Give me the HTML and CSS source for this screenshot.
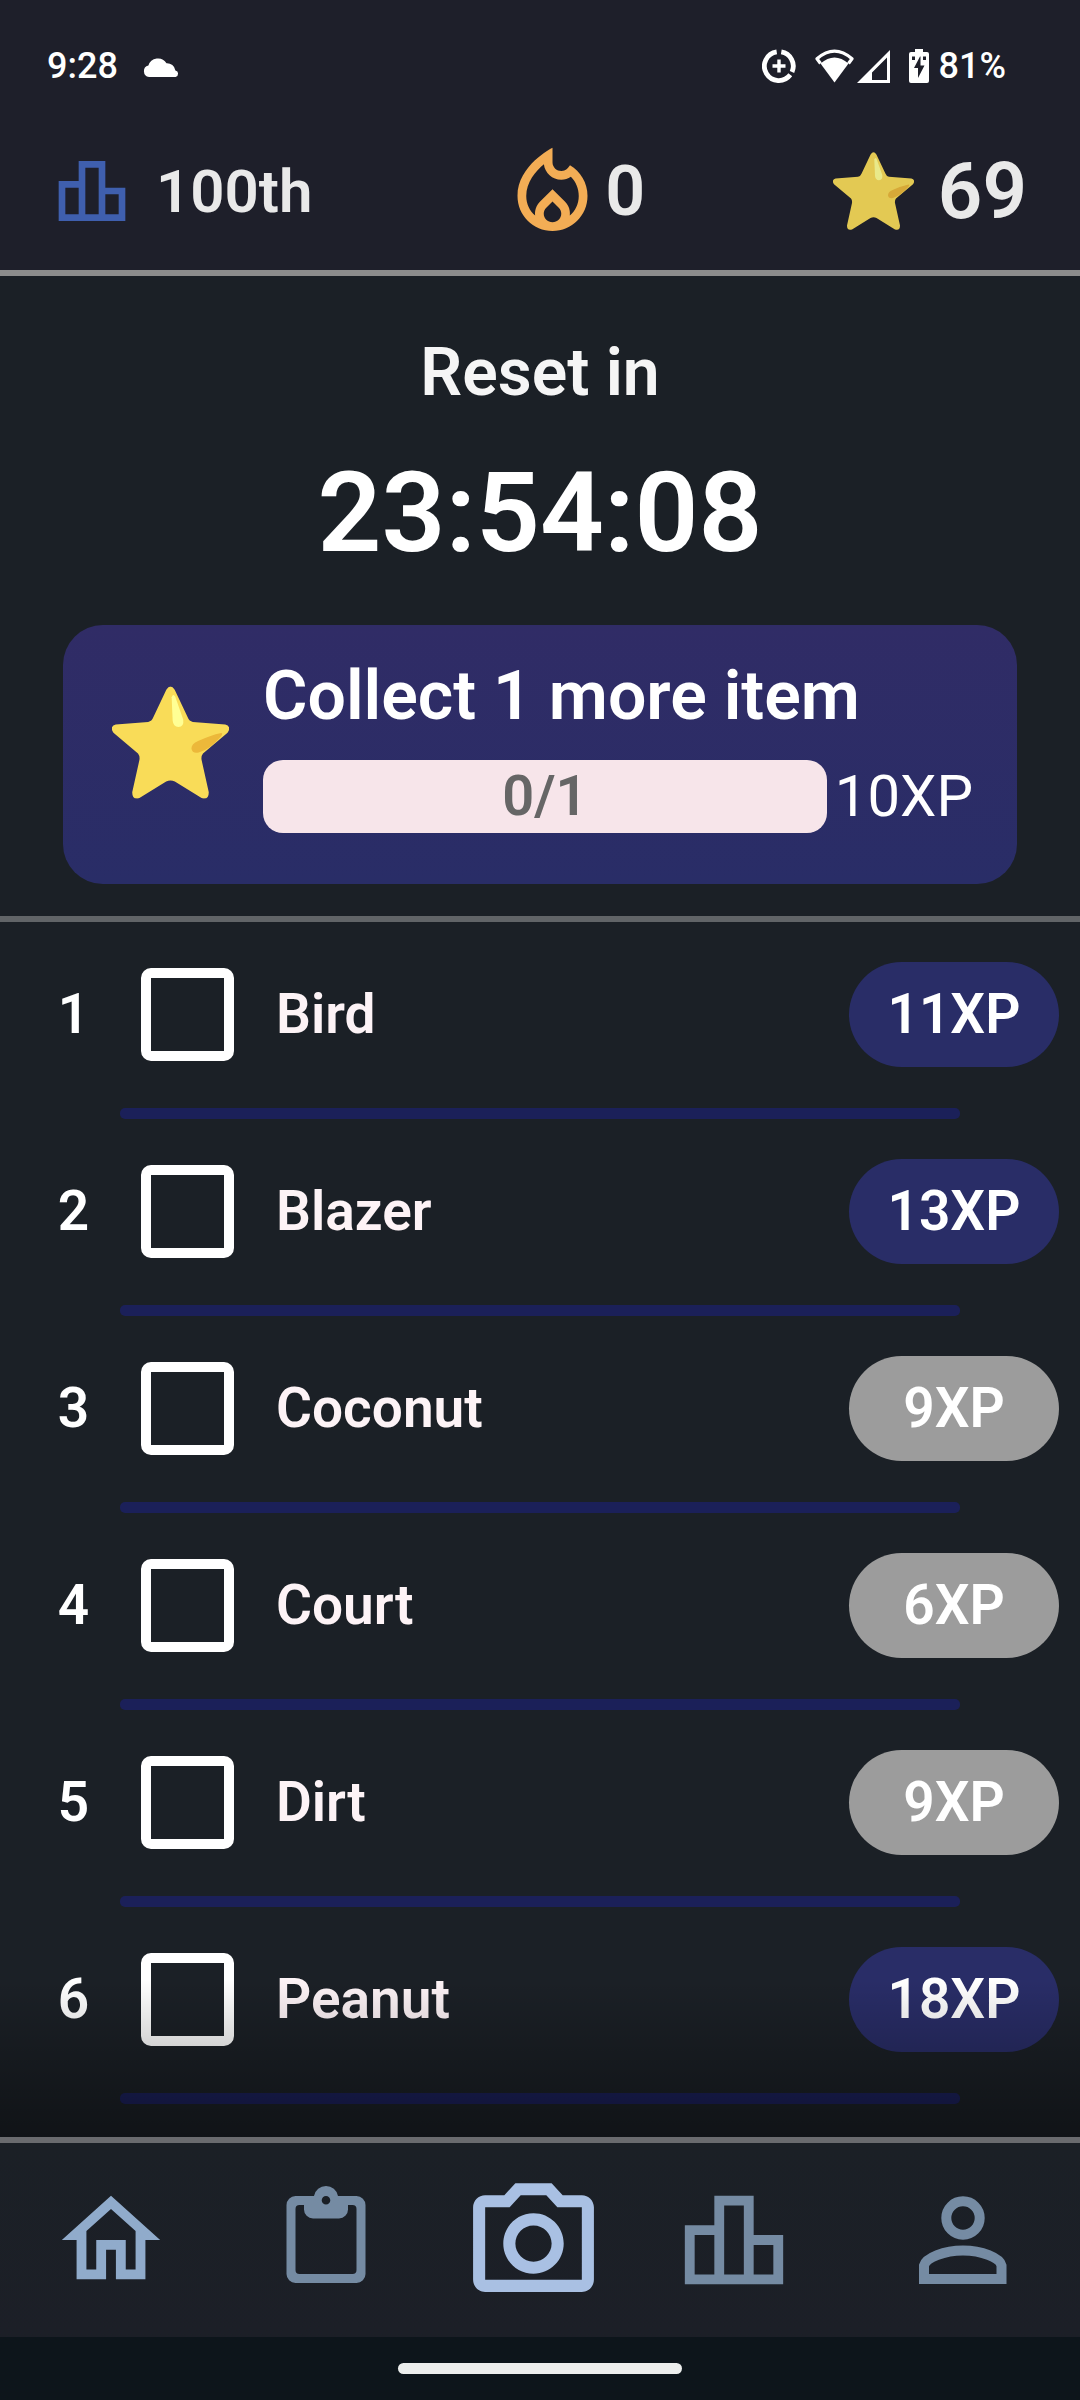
FILE: index.html
```html
<!DOCTYPE html>
<html lang="en">
<head>
<meta charset="utf-8">
<meta name="viewport" content="width=device-width, initial-scale=1">
<title>Daily items</title>
<link rel="stylesheet" href="styles.css">
</head>
<body>
<svg class="defs" aria-hidden="true">
  <symbol id="star" viewBox="0 0 81 78">
    <path fill="#f9dc58" d="M37.6 2.4Q40.5-2 43.4 2.4L52.4 21.6Q53.4 24.4 56 24.8L78.4 26.6Q83 28 80 32.2L63 46.6Q61.6 48.4 62 51L67 73.4Q67 79 62 77.4L43.500 66Q40.500 64.6 37.500 66L19 77.400Q14 79 14 73.400L19 51Q19.400 48.400 18 46.600L1 32.200Q-2 28 2.600 26.600L25 24.800Q27.600 24.400 28.600 21.600Z"/>
    <path fill="#ffff94" d="M41.300 7.600Q42.400 4.600 43.800 7.400L49.300 23Q50 28 46 28.300Q42.400 28 42 24Z"/>
    <path fill="#ecb83a" d="M75.600 32.400Q77 32.400 75.600 34.600Q68 43.600 60 46Q55.400 46.800 55 43.200Q55 40 59.600 38Q68 34 75.600 32.400Z"/>
  </symbol>
  <symbol id="bars" viewBox="0 0 24 24">
    <path fill="currentColor" d="M16 11V3H8v6H2v12h20V11h-6zm-6-6h4v14h-4V5zm-6 6h4v8H4v-8zm16 8h-4v-6h4v6z"/>
  </symbol>
</svg>

<header class="top">
  <div class="status">
    <span>9:28</span>
    <svg class="cloud" viewBox="0 0 36 21" aria-hidden="true"><path fill="#fff" d="M6 21a5.800 5.800 0 0 1-.6-11.400A10 10 0 0 1 23.500 7.200a8.500 8.500 0 0 1 8.900 7.200A3.400 3.400 0 0 1 32.600 21z"/></svg>
    <span class="spacer"></span>
    <svg class="saver" viewBox="0 0 34 34" aria-hidden="true"><g fill="none" stroke="#fff" stroke-width="4.800"><path d="M14.700 2.900A14.400 14.400 0 1 0 28.300 25.800"/><path d="M19.300 2.900A14.400 14.400 0 0 1 30 23"/><path stroke-width="3.400" d="M17 10.500v13M10.500 17h13"/></g></svg>
    <svg class="wifi" viewBox="0 0 39 34" aria-hidden="true"><path fill="#fff" d="M19.500 33.500L5.500 14.500Q19.500 2.500 33.500 14.500Z"/><path fill="none" stroke="#fff" stroke-width="3.200" stroke-linejoin="round" d="M5.500 14.500L2 9.700Q19.500-5.500 37 9.700L33.500 14.500"/></svg>
    <svg class="signal" viewBox="0 0 33 33" aria-hidden="true"><path fill="#fff" fill-rule="evenodd" d="M33 0V33H0ZM30 7.500L15 22.600V30H30Z"/></svg>
    <svg class="battery" viewBox="0 0 20 34" aria-hidden="true"><path fill="#fff" d="M6 0h8v3h4a2 2 0 0 1 2 2v27a2 2 0 0 1-2 2H2a2 2 0 0 1-2-2V5a2 2 0 0 1 2-2h4z"/><path fill="#1e1f2a" d="M11 7.500L5 19h4v10l6.500-12.500h-4V7.500zM3 7.500h3V11H3zM14 7.500h3V11h-3z"/></svg>
    <span>81%</span>
  </div>
  <div class="stats">
    <div class="stat stat-rank"><svg viewBox="0 0 24 24" aria-hidden="true"><use href="#bars"/></svg><span>100th</span></div>
    <div class="stat stat-streak"><svg viewBox="0 0 24 24" aria-hidden="true"><path fill="#f3ad55" d="M16 6l-.44.55c-.42.52-.98.75-1.540.75C13 7.300 12 6.520 12 5.300V2S4 6 4 13c0 4.420 3.580 8 8 8s8-3.580 8-8c0-2.960-1.610-5.620-4-7zm-4 13c-1.100 0-2-.87-2-1.940 0-.51.2-.99.58-1.360L12 14.300l1.430 1.400c.37.37.57.85.57 1.360 0 1.070-.9 1.940-2 1.940zm3.960-1.500c.04-.36.22-1.890-1.130-3.220L12 11.500l-2.830 2.780C7.810 15.620 8 17.160 8.040 17.500 6.790 16.400 6 14.790 6 13c0-3.160 2.130-5.650 4.030-7.250.23 1.990 1.930 3.550 3.990 3.550.78 0 1.540-.23 2.180-.66C17.340 9.780 18 11.350 18 13c0 1.790-.79 3.400-2.040 4.500z"/></svg><span>0</span></div>
    <div class="stat stat-points"><svg viewBox="0 0 81 78" aria-hidden="true"><use href="#star"/></svg><span>69</span></div>
  </div>
</header>

<main>
  <section class="hero">
    <h1 class="reset">Reset in</h1>
    <div class="timer" role="timer">23:54:08</div>
    <div class="goal">
      <svg class="goal-star" viewBox="0 0 81 78" aria-hidden="true"><use href="#star"/></svg>
      <div class="goal-body">
        <h2 class="goal-title">Collect 1 more item</h2>
        <div class="goal-row">
          <div class="meter" role="progressbar" aria-label="Items collected" aria-valuemin="0" aria-valuemax="1" aria-valuenow="0">0/1</div>
          <span class="reward">10XP</span>
        </div>
      </div>
    </div>
  </section>

  <section class="items">
    <ol class="list">
      <li class="item"><div class="item-row"><span class="num">1</span><input class="check" type="checkbox" id="item1"><label class="name" for="item1">Bird</label><span class="pill">11XP</span></div></li>
      <li class="item"><div class="item-row"><span class="num">2</span><input class="check" type="checkbox" id="item2"><label class="name" for="item2">Blazer</label><span class="pill">13XP</span></div></li>
      <li class="item"><div class="item-row"><span class="num">3</span><input class="check" type="checkbox" id="item3"><label class="name" for="item3">Coconut</label><span class="pill pill-low">9XP</span></div></li>
      <li class="item"><div class="item-row"><span class="num">4</span><input class="check" type="checkbox" id="item4"><label class="name" for="item4">Court</label><span class="pill pill-low">6XP</span></div></li>
      <li class="item"><div class="item-row"><span class="num">5</span><input class="check" type="checkbox" id="item5"><label class="name" for="item5">Dirt</label><span class="pill pill-low">9XP</span></div></li>
      <li class="item"><div class="item-row"><span class="num">6</span><input class="check" type="checkbox" id="item6"><label class="name" for="item6">Peanut</label><span class="pill">18XP</span></div></li>
    </ol>
  </section>
</main>

<nav class="nav" aria-label="Main">
  <button class="tab tab-home" type="button" aria-label="Home"><svg viewBox="0 0 24 24"><path fill="currentColor" d="M12 5.690l5 4.500V18h-2v-6H9v6H7v-7.810l5-4.500M12 3L2 12h3v8h6v-6h2v6h6v-8h3L12 3z"/></svg></button>
  <button class="tab" type="button" aria-label="Tasks"><svg viewBox="0 0 118 118"><path fill="currentColor" fill-rule="evenodd" d="M28.500 15H47a12.200 12.200 0 0 1 24 0h18.500a9 9 0 0 1 9 9v69a9 9 0 0 1-9 9h-61a9 9 0 0 1-9-9V24a9 9 0 0 1 9-9zM37 24h-4.500a4 4 0 0 0-4 4v61a4 4 0 0 0 4 4h53a4 4 0 0 0 4-4V28a4 4 0 0 0-4-4H81v4.500a9 9 0 0 1-9 9H46a9 9 0 0 1-9-9zM59 15a4.300 4.300 0 1 0 0 8.600a4.300 4.300 0 1 0 0-8.600z"/></svg></button>
  <button class="tab tab-camera" type="button" aria-label="Camera"><svg viewBox="0 0 24 24"><path fill="currentColor" d="M14.120 5l1.830 2H20v12H4V7h4.050l1.830-2h4.240M15 3H9L7.170 5H4c-1.100 0-2 .9-2 2v12c0 1.100.9 2 2 2h16c1.100 0 2-.9 2-2V7c0-1.100-.9-2-2-2h-3.170L15 3zm-3 7c1.650 0 3 1.350 3 3s-1.350 3-3 3-3-1.350-3-3 1.350-3 3-3m0-2c-2.760 0-5 2.240-5 5s2.240 5 5 5 5-2.240 5-5-2.240-5-5-5z"/></svg></button>
  <button class="tab" type="button" aria-label="Leaderboard"><svg viewBox="0 0 24 24"><use href="#bars"/></svg></button>
  <button class="tab" type="button" aria-label="Profile"><svg viewBox="0 0 118 118"><g fill="none" stroke="currentColor" stroke-width="10"><circle cx="59" cy="37" r="16.700"/><path d="M20 98V84.500C22 77 40 69.500 59 69.500S96 77 97.500 84.500V98Z"/></g></svg></button>
</nav>
<div class="gesture"><div class="handle"></div></div>
</body>
</html>
```
FILE: styles.css
```css
* {
  box-sizing: border-box;
}

body {
  margin: 0;
  min-height: 100vh;
  display: flex;
  flex-direction: column;
  background: #1b2026;
  color: #fff;
  font-family: Roboto, "Liberation Sans", sans-serif;
  font-weight: 600;
}

svg {
  display: block;
  flex: none;
}

h1,
h2 {
  margin: 0;
  font-weight: 600;
}

.defs {
  position: absolute;
  width: 0;
  height: 0;
}

/* Status bar and stats */
.top {
  background: #1e1f2a;
  border-bottom: 6px solid #8c8c8c;
  padding-bottom: 20px;
}

.status {
  display: flex;
  align-items: center;
  height: 132px;
  padding: 0 74px 0 47px;
  font-size: 36px;
  font-weight: 500;
}

.spacer {
  flex: 1;
}

.cloud {
  width: 36px;
  height: 21px;
  margin-left: 25px;
}

.saver {
  width: 34px;
  height: 34px;
  margin-right: 19px;
}

.wifi {
  width: 39px;
  height: 34px;
  margin-right: 3px;
}

.signal {
  width: 33px;
  height: 33px;
  margin-right: 19px;
}

.battery {
  width: 20px;
  height: 34px;
  margin-right: 10px;
}

.stats {
  display: flex;
  align-items: center;
  justify-content: space-between;
  height: 118px;
  padding: 0 53px 0 52px;
}

.stat {
  display: flex;
  align-items: center;
  color: #e9e9e9;
}

.stat-rank {
  gap: 24px;
  font-size: 60px;
}

.stat-rank svg {
  width: 80px;
  height: 80px;
  color: #3f5fae;
}

.stat-streak {
  font-size: 70px;
}

.stat-streak svg {
  width: 105px;
  height: 105px;
}

.stat-points {
  gap: 24px;
  font-size: 78px;
}

.stat-points svg {
  width: 81px;
  height: 78px;
  opacity: 0.9;
}

/* Countdown and goal card */
.hero {
  padding: 57px 63px 32px;
  border-bottom: 6px solid #616467;
}

.reset {
  color: #f5f5f5;
  font-size: 66px;
  line-height: 80px;
  text-align: center;
}

.timer {
  margin: 34px 0 46px;
  font-size: 112px;
  line-height: 132px;
  text-align: center;
}

.goal {
  display: flex;
  align-items: center;
  gap: 34px;
  padding: 31px 44px 51px 49px;
  border-radius: 40px;
  background: linear-gradient(#302c66, #292d67);
}

.goal-star {
  width: 117px;
  height: 113px;
  margin-bottom: 4px;
}

.goal-body {
  flex: 1;
}

.goal-title {
  margin-bottom: 24px;
  font-size: 68px;
  line-height: 80px;
}

.goal-row {
  display: flex;
  align-items: center;
  gap: 8px;
}

.meter {
  flex: 1;
  height: 73px;
  border-radius: 20px;
  background: #f7e5ea;
  color: #666;
  font-size: 56px;
  line-height: 73px;
  text-align: center;
}

.reward {
  font-size: 58px;
  font-weight: 400;
  line-height: 73px;
}

/* Item list */
.items {
  position: relative;
  padding-bottom: 33px;
}

.items::after {
  content: "";
  position: absolute;
  inset: auto 0 0;
  height: 157px;
  background: linear-gradient(transparent, rgba(0, 0, 0, 0.4));
  pointer-events: none;
}

.list {
  margin: 0;
  padding: 0;
  list-style: none;
}

.item {
  padding-top: 39px;
}

.item::after {
  content: "";
  display: block;
  height: 11px;
  margin: 41px 120px 0;
  border-radius: 5px;
  background: #1b2059;
}

.item-row {
  display: flex;
  align-items: center;
  height: 106px;
  padding: 0 21px 0 40px;
  font-size: 55px;
}

.num {
  width: 67px;
  text-align: center;
}

.check {
  appearance: none;
  width: 93px;
  height: 93px;
  margin: 0 42px 0 34px;
  border: 10px solid #fff;
  border-radius: 10px;
}

.name {
  flex: 1;
  color: #fdf3f6;
}

.pill {
  width: 210px;
  height: 105px;
  border-radius: 53px;
  background: #292d67;
  line-height: 105px;
  text-align: center;
}

.pill-low {
  background: #9c9c9c;
}

/* Bottom navigation */
.nav {
  display: grid;
  grid-template-columns: 192fr 214fr 177fr 200fr 234fr;
  column-gap: 12px;
  height: 200px;
  padding-left: 15px;
  border-top: 6px solid #6a6b6e;
  background: linear-gradient(#1b2026, #1c1f27);
}

.tab {
  display: flex;
  align-items: center;
  justify-content: center;
  margin: 0;
  padding: 0;
  border: 0;
  background: none;
  color: #758ba3;
}

.tab svg {
  width: 118px;
  height: 118px;
}

.tab-home {
  color: #90abcb;
}

.tab-camera {
  padding-bottom: 6px;
  color: #a9c0e3;
}

.tab-camera svg {
  width: 145px;
  height: 145px;
}

.gesture {
  flex: 1;
  display: flex;
  align-items: center;
  justify-content: center;
  min-height: 63px;
  background: #0d151b;
}

.handle {
  width: 284px;
  height: 11px;
  border-radius: 6px;
  background: #eceeed;
}
```
